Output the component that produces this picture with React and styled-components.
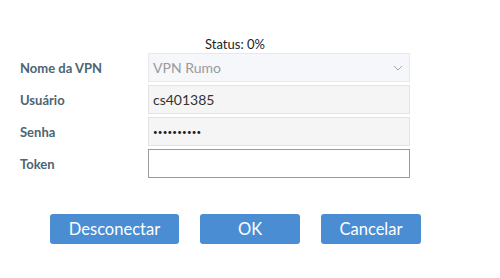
import styled, { createGlobalStyle } from 'styled-components'

const GlobalStyle = createGlobalStyle`
  html, body {
    margin: 0;
    padding: 0;
    background: #ffffff;
  }
  body {
    font-family: Lato, 'Liberation Sans', sans-serif;
  }
`

const Page = styled('div')`
  width: 500px;
  height: 278px;
  padding-top: 36px;
  box-sizing: border-box;
  display: flex;
  flex-direction: column;
`

const Status = styled('div')`
  width: 470px;
  text-align: center;
  font-size: 13px;
  line-height: 16px;
  color: #222;
  height: 17px;
`

const Form = styled('div')`
  display: grid;
  grid-template-columns: 128px 262px;
  grid-auto-rows: 29px;
  row-gap: 3px;
  padding-left: 20px;
`

const Label = styled('label')`
  display: flex;
  align-items: center;
  font-size: 13px;
  font-weight: 700;
  color: #4d6474;
`

const Field = styled('div')`
  display: flex;
  align-items: center;
  justify-content: space-between;
  box-sizing: border-box;
  padding: 0 6px 0 4px;
  font-size: 14px;
  color: ${props => props.placeholder ? '#9a9a9a' : '#333'};
  background: ${props => props.bg || '#f5f5f5'};
  border: 1px solid ${props => props.border || '#e3e3e3'};
`

const Dots = styled('span')`
  font-size: 8px;
  letter-spacing: 0.2px;
  color: #222;
`

const Buttons = styled('div')`
  display: flex;
  gap: 21px;
  padding-left: 50px;
  margin-top: 36px;
`

const Button = styled('button')`
  width: ${props => props.wide ? '129px' : '100px'};
  height: 30px;
  border: none;
  border-radius: 3px;
  background: #4a8dd3;
  color: #fff;
  font-family: Lato, 'Liberation Sans', sans-serif;
  font-size: 16.5px;
  padding: 0;
  cursor: pointer;
`

const Chevron = () => (
  <svg width="10" height="6" viewBox="0 0 10 6">
    <path d="M1 1 L5 5 L9 1" fill="none" stroke="#a5a5a5" strokeWidth="1" />
  </svg>
)

export default function App() {
  return (
    <Page>
      <GlobalStyle />
      <Status>Status: 0%</Status>
      <Form>
        <Label>Nome da VPN</Label>
        <Field placeholder="1" bg="#f5f7fb" border="#e6e8ec">
          <span>VPN Rumo</span>
          <Chevron />
        </Field>
        <Label>Usuário</Label>
        <Field>cs401385</Field>
        <Label>Senha</Label>
        <Field><Dots>••••••••••</Dots></Field>
        <Label>Token</Label>
        <Field bg="#ffffff" border="#9a9a9a" />
      </Form>
      <Buttons>
        <Button wide>Desconectar</Button>
        <Button>OK</Button>
        <Button>Cancelar</Button>
      </Buttons>
    </Page>
  )
}
